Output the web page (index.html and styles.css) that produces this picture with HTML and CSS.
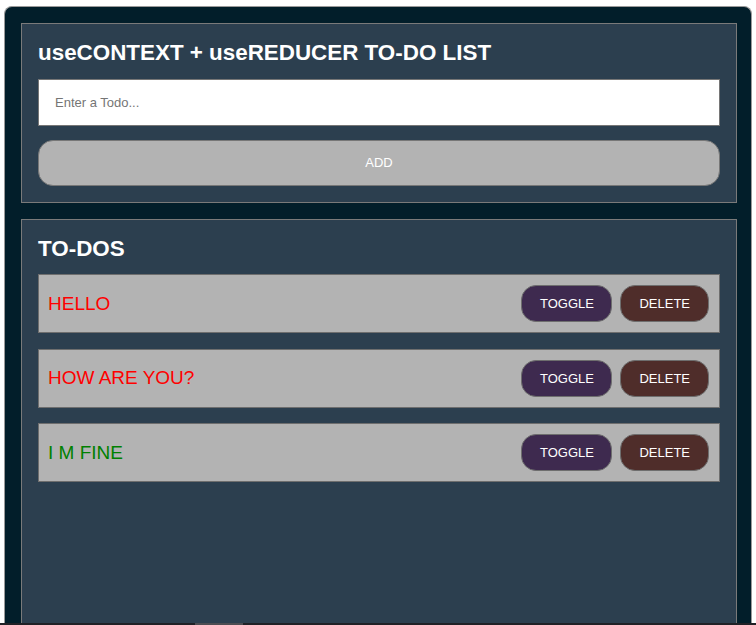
FILE: index.html
```html
<!DOCTYPE html>
<html lang="en">
<head>
<meta charset="utf-8">
<title>Todo</title>
<link rel="stylesheet" href="styles.css">
</head>
<body>
<div class="app">
  <section class="panel">
    <h1 class="title">useCONTEXT + useREDUCER TO-DO LIST</h1>
    <form class="form">
      <input class="input" type="text" placeholder="Enter a Todo...">
      <button class="add" type="button">ADD</button>
    </form>
  </section>
  <section class="panel panel-list">
    <h1 class="title">TO-DOS</h1>
    <div class="item">
      <span class="label pending">HELLO</span>
      <div class="actions">
        <button class="btn toggle" type="button">TOGGLE</button>
        <button class="btn delete" type="button">DELETE</button>
      </div>
    </div>
    <div class="item">
      <span class="label pending">HOW ARE YOU?</span>
      <div class="actions">
        <button class="btn toggle" type="button">TOGGLE</button>
        <button class="btn delete" type="button">DELETE</button>
      </div>
    </div>
    <div class="item">
      <span class="label done">I M FINE</span>
      <div class="actions">
        <button class="btn toggle" type="button">TOGGLE</button>
        <button class="btn delete" type="button">DELETE</button>
      </div>
    </div>
  </section>
</div>
<div class="hscroll"><div class="thumb"></div></div>
</body>
</html>
```
FILE: styles.css
```css
* { box-sizing: border-box; }
html, body { margin: 0; background: #ffffff; }
body {
  padding: 6px 4px 0 4px;
  font-family: "Liberation Sans", Arial, sans-serif;
  overflow: hidden;
}
.app {
  background: #021e2a;
  border: 1px solid #9a9a9a;
  border-bottom: none;
  border-radius: 8px 8px 0 0;
  padding: 16px 14px 0 16px;
  display: flex;
  flex-direction: column;
  gap: 16px;
}
.panel {
  background: #2c3f4f;
  border: 1px solid #7a7a7a;
  padding: 16px;
}
.panel-list { min-height: 440px; }
.title {
  margin: 0 0 14px 0;
  font-size: 22.4px;
  line-height: 25px;
  font-weight: bold;
  color: #ffffff;
}
.panel-list .title { margin-bottom: 13px; }
.form {
  display: flex;
  flex-direction: column;
  gap: 14px;
  margin: 0;
}
.input {
  height: 46.5px;
  border: 1px solid #767676;
  background: #ffffff;
  padding: 0 16px;
  font-family: "Liberation Sans", Arial, sans-serif;
  font-size: 13px;
  color: #333;
  outline: none;
}
.input::placeholder { color: #757575; }
.add {
  height: 46.5px;
  background: #b3b3b3;
  border: 1px solid #777;
  border-radius: 15px;
  color: #ffffff;
  font-family: "Liberation Sans", Arial, sans-serif;
  font-size: 13px;
}
.item {
  display: flex;
  align-items: center;
  justify-content: space-between;
  background: #b3b3b3;
  border: 1px solid #6e6e6e;
  padding: 10px 10px 10px 9px;
  margin-bottom: 15.5px;
}
.label {
  font-size: 19px;
}
.pending { color: #ff0000; }
.done { color: #008000; }
.actions {
  display: flex;
  gap: 8px;
}
.btn {
  height: 37px;
  padding: 0 17.5px;
  border: 1px solid #6e6e6e;
  border-radius: 15px;
  color: #ffffff;
  font-family: "Liberation Sans", Arial, sans-serif;
  font-size: 13px;
}
.toggle { background: #3e2a4f; }
.delete { background: #4f2d2a; padding: 0 18px; }
.hscroll {
  position: fixed;
  left: 0;
  right: 0;
  bottom: 0;
  height: 2px;
  background: #202126;
}
.thumb {
  position: absolute;
  left: 195px;
  width: 48px;
  top: 0;
  bottom: 0;
  background: #4d4d52;
}
```
